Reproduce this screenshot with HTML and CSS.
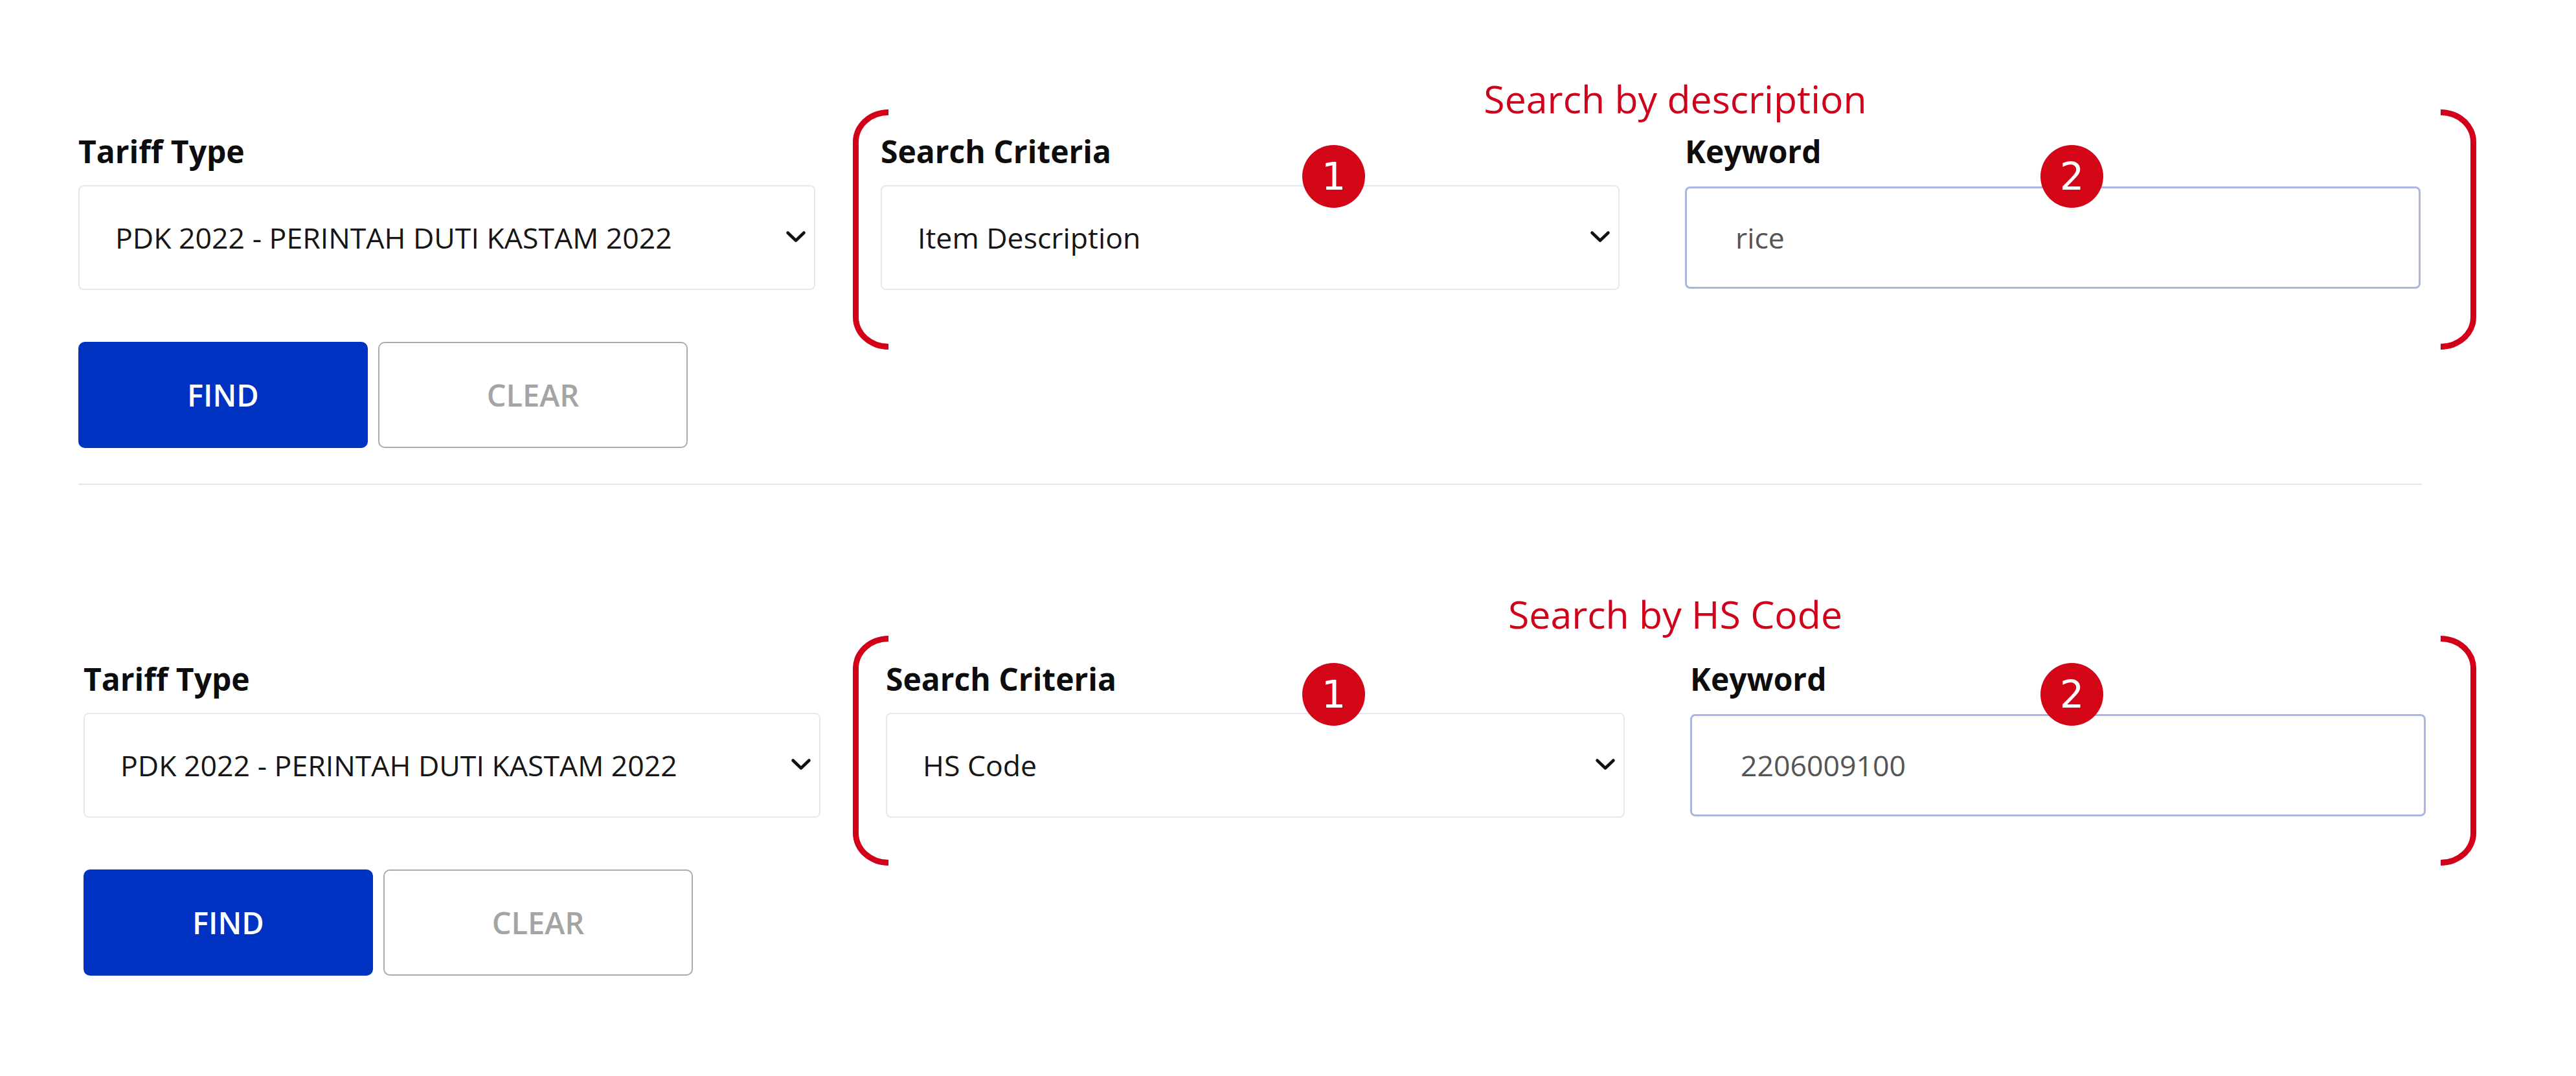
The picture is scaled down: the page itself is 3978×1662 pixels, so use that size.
FILE: index.html
```html
<!DOCTYPE html>
<html lang="en">
<head>
<meta charset="utf-8">
<title>Tariff Search</title>
<link rel="stylesheet" href="styles.css">
</head>
<body>
<main class="screen">
  <section class="block block--desc">
    <div class="fields">
      <div class="field">
        <label class="label">Tariff Type</label>
        <div class="select">
          <span class="select__value">PDK 2022 - PERINTAH DUTI KASTAM 2022</span>
          <svg class="chevron" viewBox="0 0 32 20" width="32" height="20"><polyline points="3.5,3.5 16,15.5 28.5,3.5" fill="none" stroke="#111" stroke-width="4.6" stroke-linecap="round" stroke-linejoin="round"/></svg>
        </div>
      </div>
      <div class="field">
        <label class="label">Search Criteria</label>
        <div class="select">
          <span class="select__value">Item Description</span>
          <svg class="chevron" viewBox="0 0 32 20" width="32" height="20"><polyline points="3.5,3.5 16,15.5 28.5,3.5" fill="none" stroke="#111" stroke-width="4.6" stroke-linecap="round" stroke-linejoin="round"/></svg>
        </div>
      </div>
      <div class="field">
        <label class="label">Keyword</label>
        <div class="input">rice</div>
      </div>
    </div>
    <div class="actions">
      <button class="btn btn--find">FIND</button>
      <button class="btn btn--clear">CLEAR</button>
    </div>
    <p class="note">Search by description</p>
    <span class="bracket bracket--left"></span>
    <span class="bracket bracket--right"></span>
    <span class="badge badge--one">1</span>
    <span class="badge badge--two">2</span>
  </section>

  <hr class="divider">

  <section class="block block--hs">
    <div class="fields">
      <div class="field">
        <label class="label">Tariff Type</label>
        <div class="select">
          <span class="select__value">PDK 2022 - PERINTAH DUTI KASTAM 2022</span>
          <svg class="chevron" viewBox="0 0 32 20" width="32" height="20"><polyline points="3.5,3.5 16,15.5 28.5,3.5" fill="none" stroke="#111" stroke-width="4.6" stroke-linecap="round" stroke-linejoin="round"/></svg>
        </div>
      </div>
      <div class="field">
        <label class="label">Search Criteria</label>
        <div class="select">
          <span class="select__value">HS Code</span>
          <svg class="chevron" viewBox="0 0 32 20" width="32" height="20"><polyline points="3.5,3.5 16,15.5 28.5,3.5" fill="none" stroke="#111" stroke-width="4.6" stroke-linecap="round" stroke-linejoin="round"/></svg>
        </div>
      </div>
      <div class="field">
        <label class="label">Keyword</label>
        <div class="input">2206009100</div>
      </div>
    </div>
    <div class="actions">
      <button class="btn btn--find">FIND</button>
      <button class="btn btn--clear">CLEAR</button>
    </div>
    <p class="note">Search by HS Code</p>
    <span class="bracket bracket--left"></span>
    <span class="bracket bracket--right"></span>
    <span class="badge badge--one">1</span>
    <span class="badge badge--two">2</span>
  </section>
</main>
</body>
</html>
```

FILE: styles.css
```css
html, body {
  margin: 0;
  padding: 0;
  background: #ffffff;
}

body {
  font-family: "Open Sans", "Noto Sans", sans-serif;
  color: #111111;
}

.screen {
  width: 3978px;
  height: 1662px;
  overflow: hidden;
}

.block {
  position: relative;
  padding: 206px 0 0 121px;
}

.block--hs {
  padding-left: 129px;
}

.fields {
  display: grid;
  grid-template-columns: 1138px 1141px 1136px;
  column-gap: 101px;
}

.field {
  display: flex;
  flex-direction: column;
}

.label {
  display: block;
  font-size: 48px;
  line-height: 56px;
  font-weight: 700;
  color: #0d0d0d;
  margin-bottom: 24px;
}

.select {
  box-sizing: border-box;
  height: 162px;
  border: 2px solid #e4e8ef;
  border-radius: 8px;
  display: flex;
  align-items: center;
  justify-content: space-between;
  padding: 0 12px 2px 55px;
  font-size: 44.6px;
  color: #161616;
  background: #ffffff;
}

.select__value {
  white-space: nowrap;
}

.chevron {
  display: block;
  flex: none;
}

.input {
  box-sizing: border-box;
  height: 158px;
  margin-top: 2px;
  border: 3px solid #aab5e4;
  border-radius: 8px;
  display: flex;
  align-items: center;
  padding: 0 0 2px 75px;
  font-size: 44.6px;
  color: #555555;
  background: #ffffff;
}

.actions {
  display: flex;
  gap: 16px;
  margin-top: 80px;
}

.btn {
  box-sizing: border-box;
  height: 164px;
  padding: 0 166px;
  border-radius: 10px;
  border: 2px solid transparent;
  font-family: "Open Sans", "Noto Sans", sans-serif;
  font-size: 47px;
  font-weight: 600;
  cursor: pointer;
}

.btn--find {
  background: #0032c2;
  border-color: #0032c2;
  color: #ffffff;
}

.btn--clear {
  background: #ffffff;
  border-color: #ababab;
  color: #a4a4a4;
}

.divider {
  border: 0;
  height: 2px;
  background: #e6e6e6;
  width: 3619px;
  margin: 55px 0 66px 121px;
}

.note {
  position: absolute;
  left: 2587px;
  transform: translateX(-50%);
  margin: 0;
  font-size: 59px;
  line-height: 80px;
  font-weight: 400;
  color: #d0021b;
  white-space: nowrap;
}

.block--desc .note { top: 112px; }
.block--hs .note { top: 93px; }

.bracket {
  position: absolute;
  box-sizing: border-box;
  width: 55px;
  border: 9px solid #d3001a;
}

.bracket--left {
  left: 1317px;
  border-right: 0;
  border-radius: 55px 0 0 55px / 50px 0 0 50px;
}

.bracket--right {
  left: 3769px;
  border-left: 0;
  border-radius: 0 55px 55px 0 / 0 50px 50px 0;
}

.block--desc .bracket { top: 169px; height: 371px; }
.block--hs .bracket { top: 167px; height: 355px; }

.badge {
  position: absolute;
  width: 97px;
  height: 97px;
  border-radius: 50%;
  background: #d30618;
  color: #ffffff;
  font-family: "DejaVu Sans", sans-serif;
  font-size: 59px;
  line-height: 1;
  display: flex;
  align-items: center;
  justify-content: center;
}

.badge--one { left: 2011px; }
.badge--two { left: 3151px; }

.block--desc .badge { top: 224px; }
.block--hs .badge { top: 209px; }
```
